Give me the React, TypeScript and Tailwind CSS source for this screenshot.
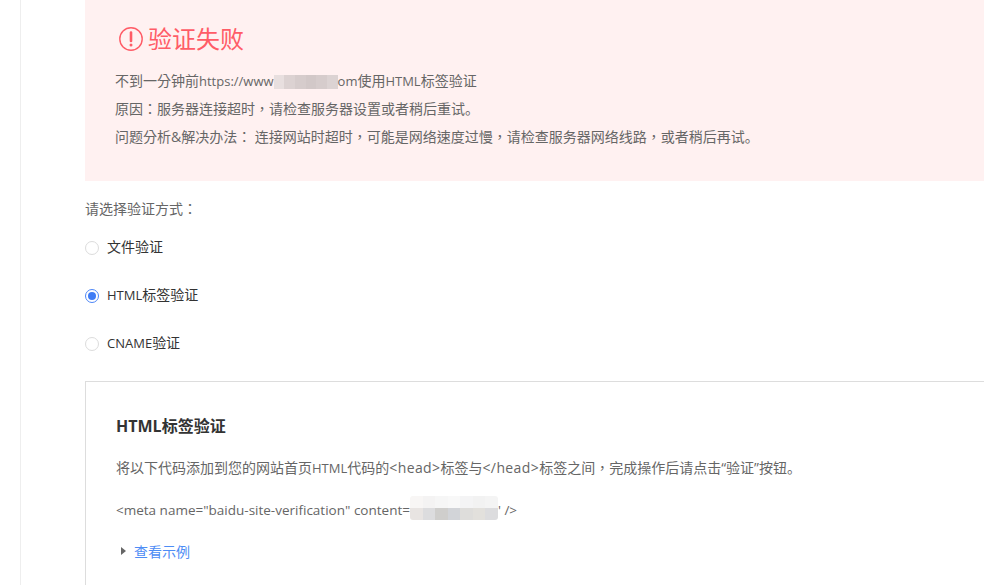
import { useState } from 'react';

const fontStack = "font-['Open_Sans','Noto_Sans_CJK_TC',sans-serif]";
const periodClass = "font-['Noto_Sans_CJK_SC',sans-serif] leading-none";
const tagClass = 'leading-none tracking-[0.4px]';

const methods = [
  { latin: '', rest: '文件验证' },
  { latin: 'HTML', rest: '标签验证' },
  { latin: 'CNAME', rest: '验证' },
];

// latin runs sit a little narrower than the CJK text around them
function L({ children }: { children: React.ReactNode }) {
  return <span className="text-[13px] leading-none">{children}</span>;
}

function Radio({ checked }: { checked: boolean }) {
  return (
    <span
      className={`mt-[3px] flex h-[14px] w-[14px] shrink-0 items-center justify-center rounded-full border bg-white ${
        checked ? 'border-[#4d86f7]' : 'border-[#dcdcdc]'
      }`}
    >
      {checked && <span className="h-2 w-2 rounded-full bg-[#3f7cf5]" />}
    </span>
  );
}

function MosaicRow({ colors, size }: { colors: string[]; size: string }) {
  return (
    <span className={`flex ${size}`}>
      {colors.map((c, i) => (
        <span key={i} className="h-full flex-1" style={{ backgroundColor: c }} />
      ))}
    </span>
  );
}

export default function App() {
  const [method, setMethod] = useState(1);

  return (
    <div className={`h-[585px] w-[984px] overflow-hidden bg-white ${fontStack} text-[14px] text-[#666]`}>
      <div className="ml-5 h-full border-l border-l-[#eeeeee] pl-16">
        {/* Error banner */}
        <div className="h-[181px] bg-[#fff1f1] pl-[30px] pt-[22px]">
          <div className="flex h-[34px] items-center pl-[4px] text-[24px] leading-[34px] text-[#ff5c67]">
            <svg width="24" height="24" viewBox="0 0 24 24" fill="none" className="mr-[5px]">
              <circle cx="12" cy="12" r="11.2" stroke="#ff5c67" strokeWidth="1.4" />
              <path d="M12 5.5v8.5" stroke="#ff5c67" strokeWidth="2.6" strokeLinecap="round" />
              <circle cx="12" cy="18" r="1.5" fill="#ff5c67" />
            </svg>
            验证失败
          </div>
          <div className="mt-[11px] leading-[28px]">
            <p>
              不到一分钟前<L>https://www</L>
              <span className="inline-flex align-middle">
                <MosaicRow size="h-[14px] w-[64px]" colors={['#e8dfdf', '#dcd2d2', '#d6cccc', '#d2c8c8', '#d6cccc', '#dcd3d3']} />
              </span>
              <L>om</L>使用<L>HTML</L>标签验证
            </p>
            <p>
              原因：服务器连接超时，请检查服务器设置或者稍后重试<span className={periodClass}>。</span>
            </p>
            <p>
              问题分析&amp;解决办法： 连接网站时超时，可能是网络速度过慢，请检查服务器网络线路，或者稍后再试
              <span className={periodClass}>。</span>
            </p>
          </div>
        </div>

        {/* Method picker */}
        <p className="mt-[18px] leading-[20px]">请选择验证方式：</p>
        <div className="mt-[3px]">
          {methods.map((m, i) => (
            <label
              key={m.rest + m.latin}
              onClick={() => setMethod(i)}
              className="flex h-[48px] cursor-pointer items-center gap-[8px] text-[#333]"
            >
              <Radio checked={method === i} />
              <span>
                <L>{m.latin}</L>
                {m.rest}
              </span>
            </label>
          ))}
        </div>

        {/* HTML tag panel */}
        <div className="mt-[15px] h-[300px] border border-r-0 border-[#dddddd] pl-[30px] pt-[32px]">
          <h3 className="text-[16px] font-bold leading-[24px] text-[#333]">HTML标签验证</h3>
          <p className="mt-[18px] leading-[24px]">
            将以下代码添加到您的网站首页<L>HTML</L>代码的<span className={tagClass}>&lt;head&gt;</span>标签与
            <span className={tagClass}>&lt;/head&gt;</span>标签之间，完成操作后请点击“验证”按钮
            <span className={periodClass}>。</span>
          </p>
          <p className="mt-[18px] text-[13.5px] leading-[24px]">
            &lt;meta name="baidu-site-verification" content=
            <span className="inline-flex -translate-y-[3px] flex-col overflow-hidden rounded-[3px] align-middle">
              <MosaicRow size="h-[12px] w-[88px]" colors={['#f8f6f5', '#f4f3f3', '#f6f6f6', '#f8f8f8', '#f4f4f5', '#f2f2f2', '#f4f4f4']} />
              <MosaicRow size="h-[12px] w-[88px]" colors={['#e8e4e2', '#dcdcde', '#cfcecc', '#d2d4d8', '#dedddb', '#e2e0dc', '#dcdcde']} />
            </span>
            ' /&gt;
          </p>
          <div className="mt-[16px] flex h-[24px] items-center pl-[5px]">
            <span className="h-0 w-0 border-y-[4px] border-l-[5px] border-y-transparent border-l-[#666]" />
            <a href="#" className="ml-[8px] text-[#4e8df5]">
              查看示例
            </a>
          </div>
        </div>
      </div>
    </div>
  );
}
